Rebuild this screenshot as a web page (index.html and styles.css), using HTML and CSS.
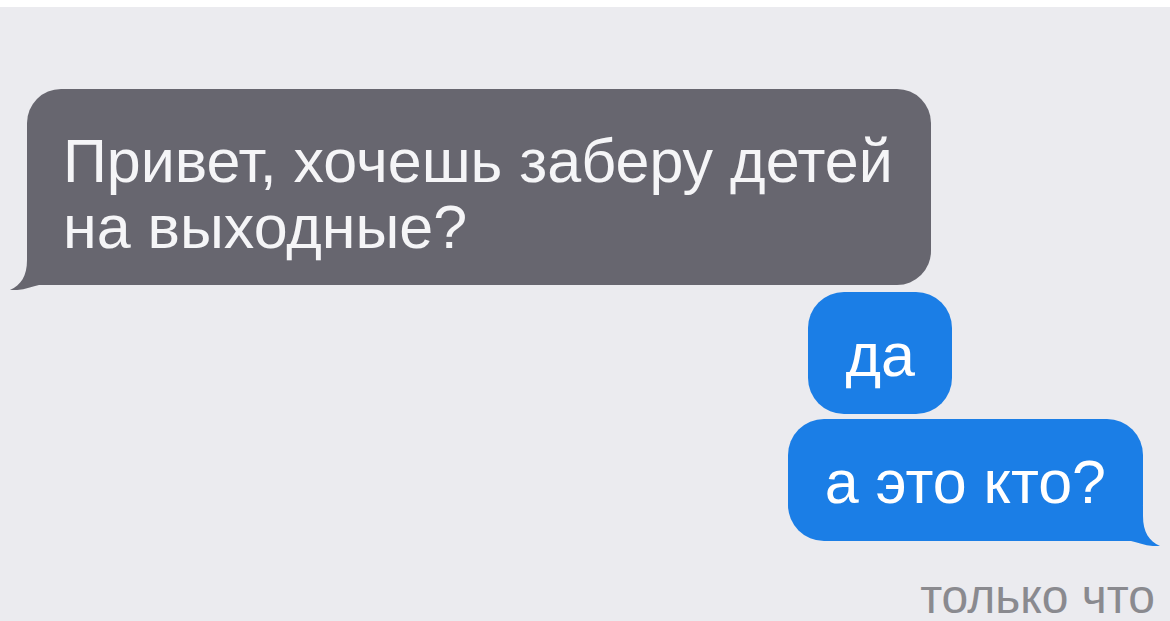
FILE: index.html
```html
<!DOCTYPE html>
<html lang="ru">
<head>
    <meta charset="UTF-8">
    <meta name="viewport" content="width=device-width, initial-scale=1.0">
    <title>Сообщения</title>
    <link rel="stylesheet" href="styles.css">
</head>
<body>
    <main class="thread">
        <div class="bubble bubble-in">
            Привет, хочешь заберу детей на выходные?
            <svg class="tail tail-in" viewBox="0 0 64 40" aria-hidden="true">
                <path d="M18 0 V10 C18 26 12 35 1 40 C12 41 22 37 30 35 H64 V0 Z"/>
            </svg>
        </div>

        <div class="bubble bubble-out bubble-first">да</div>

        <div class="bubble bubble-out bubble-last">
            а это кто?
            <svg class="tail tail-out" viewBox="0 0 64 40" aria-hidden="true">
                <path d="M18 0 V10 C18 26 12 35 1 40 C12 41 22 37 30 35 H64 V0 Z"/>
            </svg>
        </div>

        <div class="stamp">только что</div>
    </main>
</body>
</html>
```

FILE: styles.css
```css
body {
    margin: 0;
    background-color: #ebebef;
    font-family: "Liberation Sans", Arial, sans-serif;
}

.thread {
    border-top: 7px solid #fff;
    padding: 82px 15px 0 27px;
    display: flex;
    flex-direction: column;
}

.bubble {
    position: relative;
    box-sizing: border-box;
    font-size: 61px;
    line-height: 66px;
    color: #fff;
    border-radius: 34px;
}

.bubble-in {
    align-self: flex-start;
    max-width: 904px;
    padding: 39px 36px 25px;
    background-color: #67666f;
    color: #f5f5f7;
}

.bubble-out {
    align-self: flex-end;
    padding: 30px 37px 26px;
    margin-right: 12px;
    background-color: #1b7ee6;
    border-radius: 36px;
}

.bubble-first {
    margin-top: 7px;
    margin-right: 203px;
}

.bubble-last {
    margin-top: 5px;
}

/* little speech tail at the bottom corner */
.tail {
    position: absolute;
    bottom: -5px;
    width: 64px;
    height: 40px;
}

.tail-in {
    left: -18px;
    fill: #67666f;
}

.tail-out {
    right: -18px;
    fill: #1b7ee6;
    transform: scaleX(-1);
}

.stamp {
    align-self: flex-end;
    margin-top: 28px;
    font-size: 48px;
    line-height: 55px;
    color: #8a8a8f;
}
```
